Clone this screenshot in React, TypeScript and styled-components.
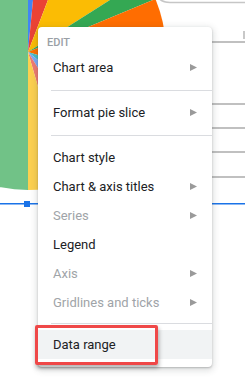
import React from "react";
import styled, { createGlobalStyle } from "styled-components";

const Global = createGlobalStyle`
  html, body { margin: 0; padding: 0; background: #ffffff; }
  body { width: 245px; height: 383px; overflow: hidden; font-family: Roboto, "Noto Sans", Arial, sans-serif; }
`;

const Stage = styled.div`
  position: relative;
  width: 245px;
  height: 383px;
  overflow: hidden;
  background: #ffffff;
`;

const ChartSvg = styled.svg`
  display: block;
`;

const Menu = styled.div`
  position: absolute;
  left: 38px;
  top: 27px;
  width: 174px;
  padding: 6px 0 8px;
  box-sizing: border-box;
  background: #ffffff;
  border-radius: 4px;
  box-shadow: 0 2px 6px 2px rgba(60, 64, 67, 0.15), 0 1px 2px rgba(60, 64, 67, 0.3);
  display: flex;
  flex-direction: column;
`;

const Header = styled.div`
  height: 20px;
  line-height: 20px;
  padding-left: 9px;
  font-size: 11px;
  font-weight: 500;
  color: #9aa0a6;
`;

const Item = styled.div<{ $disabled?: boolean; $active?: boolean }>`
  position: relative;
  height: 29px;
  display: flex;
  align-items: center;
  justify-content: space-between;
  padding: 0 15px 0 15px;
  font-size: 13px;
  color: ${(p) => (p.$disabled ? "#a0a4a8" : "#202124")};
  background: ${(p) => (p.$active ? "#f1f3f4" : "transparent")};
`;

const Arrow = styled.svg`
  display: block;
  width: 7px;
  height: 7px;
  fill: #9a9a9a;
`;

const Separator = styled.div<{ $tight?: boolean }>`
  height: 1px;
  margin: ${(p) => (p.$tight ? "6px 0 6px 13px" : "8px 0 7px 13px")};
  background: #dadce0;
`;

const Highlight = styled.div`
  position: absolute;
  left: -3px;
  top: -5px;
  width: 123px;
  height: 40px;
  box-sizing: border-box;
  border: 3px solid #ef4848;
  border-radius: 2px;
  box-shadow: 1px 3px 4px rgba(0, 0, 0, 0.3);
  pointer-events: none;
`;

const CX = 28;
const CY = 52;
const R = 138;

function slicePath(a0: number, a1: number) {
  const rad = (d: number) => (d * Math.PI) / 180;
  const x0 = CX + R * Math.sin(rad(a0));
  const y0 = CY - R * Math.cos(rad(a0));
  const x1 = CX + R * Math.sin(rad(a1));
  const y1 = CY - R * Math.cos(rad(a1));
  const large = a1 - a0 > 180 ? 1 : 0;
  return `M${CX},${CY} L${x0.toFixed(2)},${y0.toFixed(2)} A${R},${R} 0 ${large} 1 ${x1.toFixed(2)},${y1.toFixed(2)} Z`;
}

const slices: { a0: number; a1: number; color: string }[] = [
  { a0: 0, a1: 5.5, color: "#4285f4" },
  { a0: 5.5, a1: 21, color: "#ea4335" },
  { a0: 21, a1: 57.6, color: "#fbbc04" },
  { a0: 57.6, a1: 67.4, color: "#34a853" },
  { a0: 67.4, a1: 107, color: "#ff6d01" },
  { a0: 107, a1: 129, color: "#46bdc6" },
  { a0: 129, a1: 148, color: "#7baaf7" },
  { a0: 148, a1: 164, color: "#f07b72" },
  { a0: 164, a1: 180, color: "#fcd04f" },
  { a0: 180, a1: 360, color: "#71c287" },
];

const gridYs = [42, 104, 128, 152, 177];

function Chart() {
  return (
    <ChartSvg width={245} height={383} viewBox="0 0 245 383">
      {slices.map((s, i) => (
        <path key={i} d={slicePath(s.a0, s.a1)} fill={s.color} />
      ))}
      <path d="M157,-4 Q161,2.5 170,2.5 H246" fill="none" stroke="#c6c6c6" strokeWidth={1.6} />
      {gridYs.map((y) => (
        <rect key={y} x={160} y={y - 1} width={86} height={2} fill="#c0c0c0" />
      ))}
      <rect x={243} y={31} width={2} height={8} fill="#c8c8c8" />
      <rect x={0} y={203} width={245} height={1.5} fill="#1a73e8" />
      <rect x={24} y={201} width={6} height={6} fill="#1a73e8" />
    </ChartSvg>
  );
}

function SubArrow() {
  return (
    <Arrow viewBox="0 0 7 7">
      <polygon points="0,0 7,3.5 0,7" />
    </Arrow>
  );
}

type Entry =
  | { kind: "item"; label: string; sub?: boolean; disabled?: boolean; active?: boolean; marked?: boolean }
  | { kind: "sep"; tight?: boolean };

const entries: Entry[] = [
  { kind: "item", label: "Chart area", sub: true },
  { kind: "sep" },
  { kind: "item", label: "Format pie slice", sub: true },
  { kind: "sep" },
  { kind: "item", label: "Chart style" },
  { kind: "item", label: "Chart & axis titles", sub: true },
  { kind: "item", label: "Series", sub: true, disabled: true },
  { kind: "item", label: "Legend" },
  { kind: "item", label: "Axis", sub: true, disabled: true },
  { kind: "item", label: "Gridlines and ticks", sub: true, disabled: true },
  { kind: "sep", tight: true },
  { kind: "item", label: "Data range", active: true, marked: true },
];

export default function App() {
  return (
    <>
      <Global />
      <Stage>
        <Chart />
        <Menu>
          <Header>EDIT</Header>
          {entries.map((e, i) =>
            e.kind === "sep" ? (
              <Separator key={i} $tight={e.tight} />
            ) : (
              <Item key={i} $disabled={e.disabled} $active={e.active}>
                <span>{e.label}</span>
                {e.sub && <SubArrow />}
                {e.marked && <Highlight />}
              </Item>
            )
          )}
        </Menu>
      </Stage>
    </>
  );
}
